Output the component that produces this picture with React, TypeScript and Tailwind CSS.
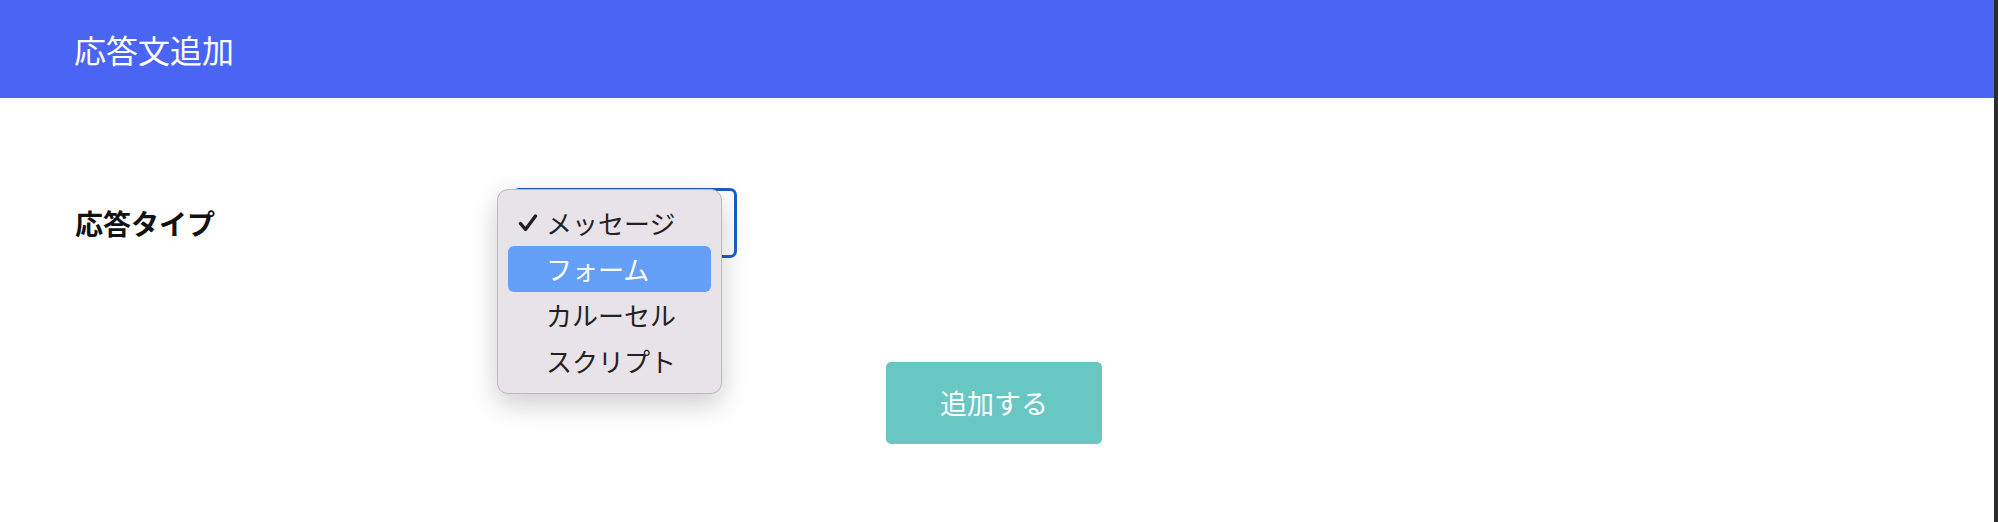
import { useState } from 'react';

const options = ['メッセージ', 'フォーム', 'カルーセル', 'スクリプト'];

const font = { fontFamily: '"Noto Sans CJK JP", "Noto Sans", sans-serif' };

const Check = () => (
  <svg width="20" height="18" viewBox="0 0 20 18" className="shrink-0">
    <path d="M2.5 9.5 L7.5 15.5 L17.5 2" fill="none" stroke="#1e1e1e" strokeWidth="3.4" strokeLinecap="round" strokeLinejoin="round" />
  </svg>
);

export default function App() {
  const [selected] = useState(0);
  const [hovered] = useState(1);

  return (
    <div className="flex w-[1998px] h-[522px] bg-white overflow-hidden" style={font}>
      <div className="flex-1 flex flex-col">
        {/* Header */}
        <header className="h-[98px] bg-[#4a65f4] flex items-center pl-[74px]">
          <h1 className="text-[32px] text-white font-normal leading-none">応答文追加</h1>
        </header>

        {/* Form */}
        <div className="pl-[75px] pr-[81px] pt-[90px]">
          <div className="flex items-center">
            <label className="w-[437px] text-[28px] font-bold text-[#111] leading-none">応答タイプ</label>
            <div className="relative">
              <div className="w-[225px] h-[70px] border-[3px] border-[#1f5cc4] rounded-[7px] bg-white" />

              {/* Open dropdown menu */}
              <div className="absolute left-[-15px] top-[1px] w-[225px] h-[205px] rounded-[11px] border border-[#bdbabe] bg-[#e8e3e9] shadow-[0_10px_28px_rgba(0,0,0,0.2)] pt-[10px] px-[10px]">
                {options.map((opt, i) => (
                  <div
                    key={opt}
                    className={
                      i === hovered
                        ? 'h-[46px] flex items-center rounded-[6px] bg-[#64a0f8] text-white'
                        : 'h-[46px] flex items-center rounded-[6px] text-[#222]'
                    }
                  >
                    <div className="w-[38px] flex justify-center pl-[2px]">{i === selected && <Check />}</div>
                    <span className="text-[26px] leading-none">{opt}</span>
                  </div>
                ))}
              </div>
            </div>
          </div>

          <div className="flex justify-center mt-[104px]">
            <button className="w-[216px] h-[82px] rounded-[5px] bg-[#68c6c3] text-white text-[27px]">
              追加する
            </button>
          </div>
        </div>
      </div>
      <div className="w-[4px] bg-[#2d2d2d]" />
    </div>
  );
}
